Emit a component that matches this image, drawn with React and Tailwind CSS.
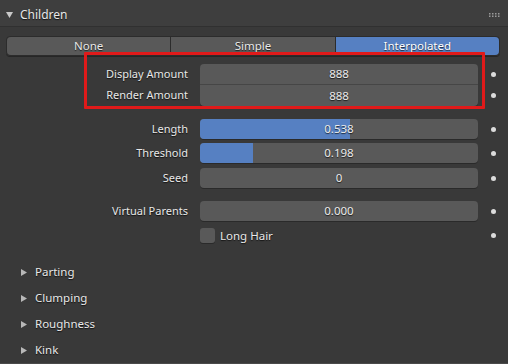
const font = { fontFamily: '"Noto Sans", "DejaVu Sans", sans-serif' };

const shadow = "[text-shadow:0_1px_1px_rgba(0,0,0,0.7)]";

function Dot() {
  return (
    <div className="w-[30px] flex justify-center">
      <div className="w-[5px] h-[5px] rounded-full bg-[#dcdcdc]" />
    </div>
  );
}

function Label({ children }) {
  return (
    <div className={`w-[188px] text-right text-[11px] text-[#e8e8e8] ${shadow}`}>
      {children}
    </div>
  );
}

function Slider({ value, fill }) {
  return (
    <div className="relative w-[278px] h-5 rounded-[4px] bg-[#595959] overflow-hidden shadow-[0_1px_0_#2a2a2a]">
      {fill > 0 && (
        <div className="absolute left-0 top-0 bottom-0 bg-[#5680c2]" style={{ width: `${fill * 100}%` }} />
      )}
      <div className={`relative h-full flex items-center justify-center text-[11.5px] text-[#ececec] ${shadow}`}>
        {value}
      </div>
    </div>
  );
}

function Row({ label, children, className = "" }) {
  return (
    <div className={`flex items-center ${className}`}>
      <Label>{label}</Label>
      <div className="ml-3">{children}</div>
      <Dot />
    </div>
  );
}

function SubPanel({ title }) {
  return (
    <div className="h-[26px] flex items-center pl-[21px]">
      <svg width="6" height="7" viewBox="0 0 6 7" className="mr-[8px]">
        <path d="M0 0 L6 3.5 L0 7 Z" fill="#b8b8b8" />
      </svg>
      <span className={`text-[11.5px] text-[#e8e8e8] ${shadow}`}>{title}</span>
    </div>
  );
}

export default function App() {
  return (
    <div className="relative w-[508px] h-[364px] bg-[#393939] overflow-hidden" style={font}>
      <div className="h-[27px] bg-[#3e3e3e] border-b border-[#303030] flex items-center pt-[3px] pl-[6px] pr-[8px]">
        <svg width="7" height="6" viewBox="0 0 7 6" className="mr-[7px]">
          <path d="M0 0 L7 0 L3.5 6 Z" fill="#c8c8c8" />
        </svg>
        <span className={`text-[12px] text-[#e8e8e8] ${shadow}`}>Children</span>
        <svg width="11" height="4" viewBox="0 0 11 4" className="ml-auto">
          {[0, 3, 6, 9].map((x) => (
            <g key={x}>
              <rect x={x} y="0" width="1.5" height="1.5" fill="#9a9a9a" />
              <rect x={x} y="2.5" width="1.5" height="1.5" fill="#9a9a9a" />
            </g>
          ))}
        </svg>
      </div>

      <div className="mt-[9px] mx-[6px] flex h-5 w-[494px] rounded-[4px] shadow-[0_1px_0_#262626] border border-[#2c2c2c]">
        <div className={`flex-1 flex items-center justify-center bg-[#595959] rounded-l-[4px] border-r border-[#2c2c2c] text-[11.5px] text-[#e8e8e8] ${shadow}`}>
          None
        </div>
        <div className={`flex-1 flex items-center justify-center bg-[#595959] border-r border-[#2c2c2c] text-[11.5px] text-[#e8e8e8] ${shadow}`}>
          Simple
        </div>
        <div className={`flex-1 flex items-center justify-center bg-[#5680c2] rounded-r-[4px] text-[11.5px] text-white ${shadow}`}>
          Interpolated
        </div>
      </div>

      <div className="mt-[8px] flex">
        <div className="flex flex-col">
          <div className="flex items-center h-[21px]">
            <Label>Display Amount</Label>
          </div>
          <div className="flex items-center h-[21px]">
            <Label>Render Amount</Label>
          </div>
        </div>
        <div className="ml-3 w-[278px] rounded-[4px] bg-[#595959] shadow-[0_1px_0_#2a2a2a] overflow-hidden">
          <div className={`h-[21px] flex items-center justify-center border-b border-[#464646] text-[11.5px] text-[#ececec] ${shadow}`}>
            888
          </div>
          <div className={`h-[21px] flex items-center justify-center text-[11.5px] text-[#ececec] ${shadow}`}>
            888
          </div>
        </div>
        <div className="flex flex-col">
          <div className="h-[21px] flex items-center"><Dot /></div>
          <div className="h-[21px] flex items-center"><Dot /></div>
        </div>
      </div>

      <Row label="Length" className="mt-[13px]">
        <Slider value="0.538" fill={0.538} />
      </Row>
      <Row label="Threshold" className="mt-[4px]">
        <Slider value="0.198" fill={0.19} />
      </Row>
      <Row label="Seed" className="mt-[5px]">
        <Slider value="0" fill={0} />
      </Row>
      <Row label="Virtual Parents" className="mt-[13px]">
        <Slider value="0.000" fill={0} />
      </Row>

      <div className="mt-[6px] flex items-center h-[17px]">
        <div className="w-[200px]" />
        <div className="w-[278px] flex items-center">
          <div className="w-[15px] h-[15px] rounded-[3px] bg-[#595959] shadow-[0_1px_0_#2a2a2a]" />
          <span className={`ml-[5px] text-[11.5px] text-[#e8e8e8] ${shadow}`}>Long Hair</span>
        </div>
        <Dot />
      </div>

      <div className="mt-[15px]">
        <SubPanel title="Parting" />
        <SubPanel title="Clumping" />
        <SubPanel title="Roughness" />
        <SubPanel title="Kink" />
      </div>
      <div className="border-t border-[#4a4a4a] h-[3px] bg-[#3c3c3c]" />

      <div className="absolute left-[84px] top-[52px] w-[401px] h-[57px] border-[3px] border-[#e01a1a] rounded-[1px] pointer-events-none" />
    </div>
  );
}
